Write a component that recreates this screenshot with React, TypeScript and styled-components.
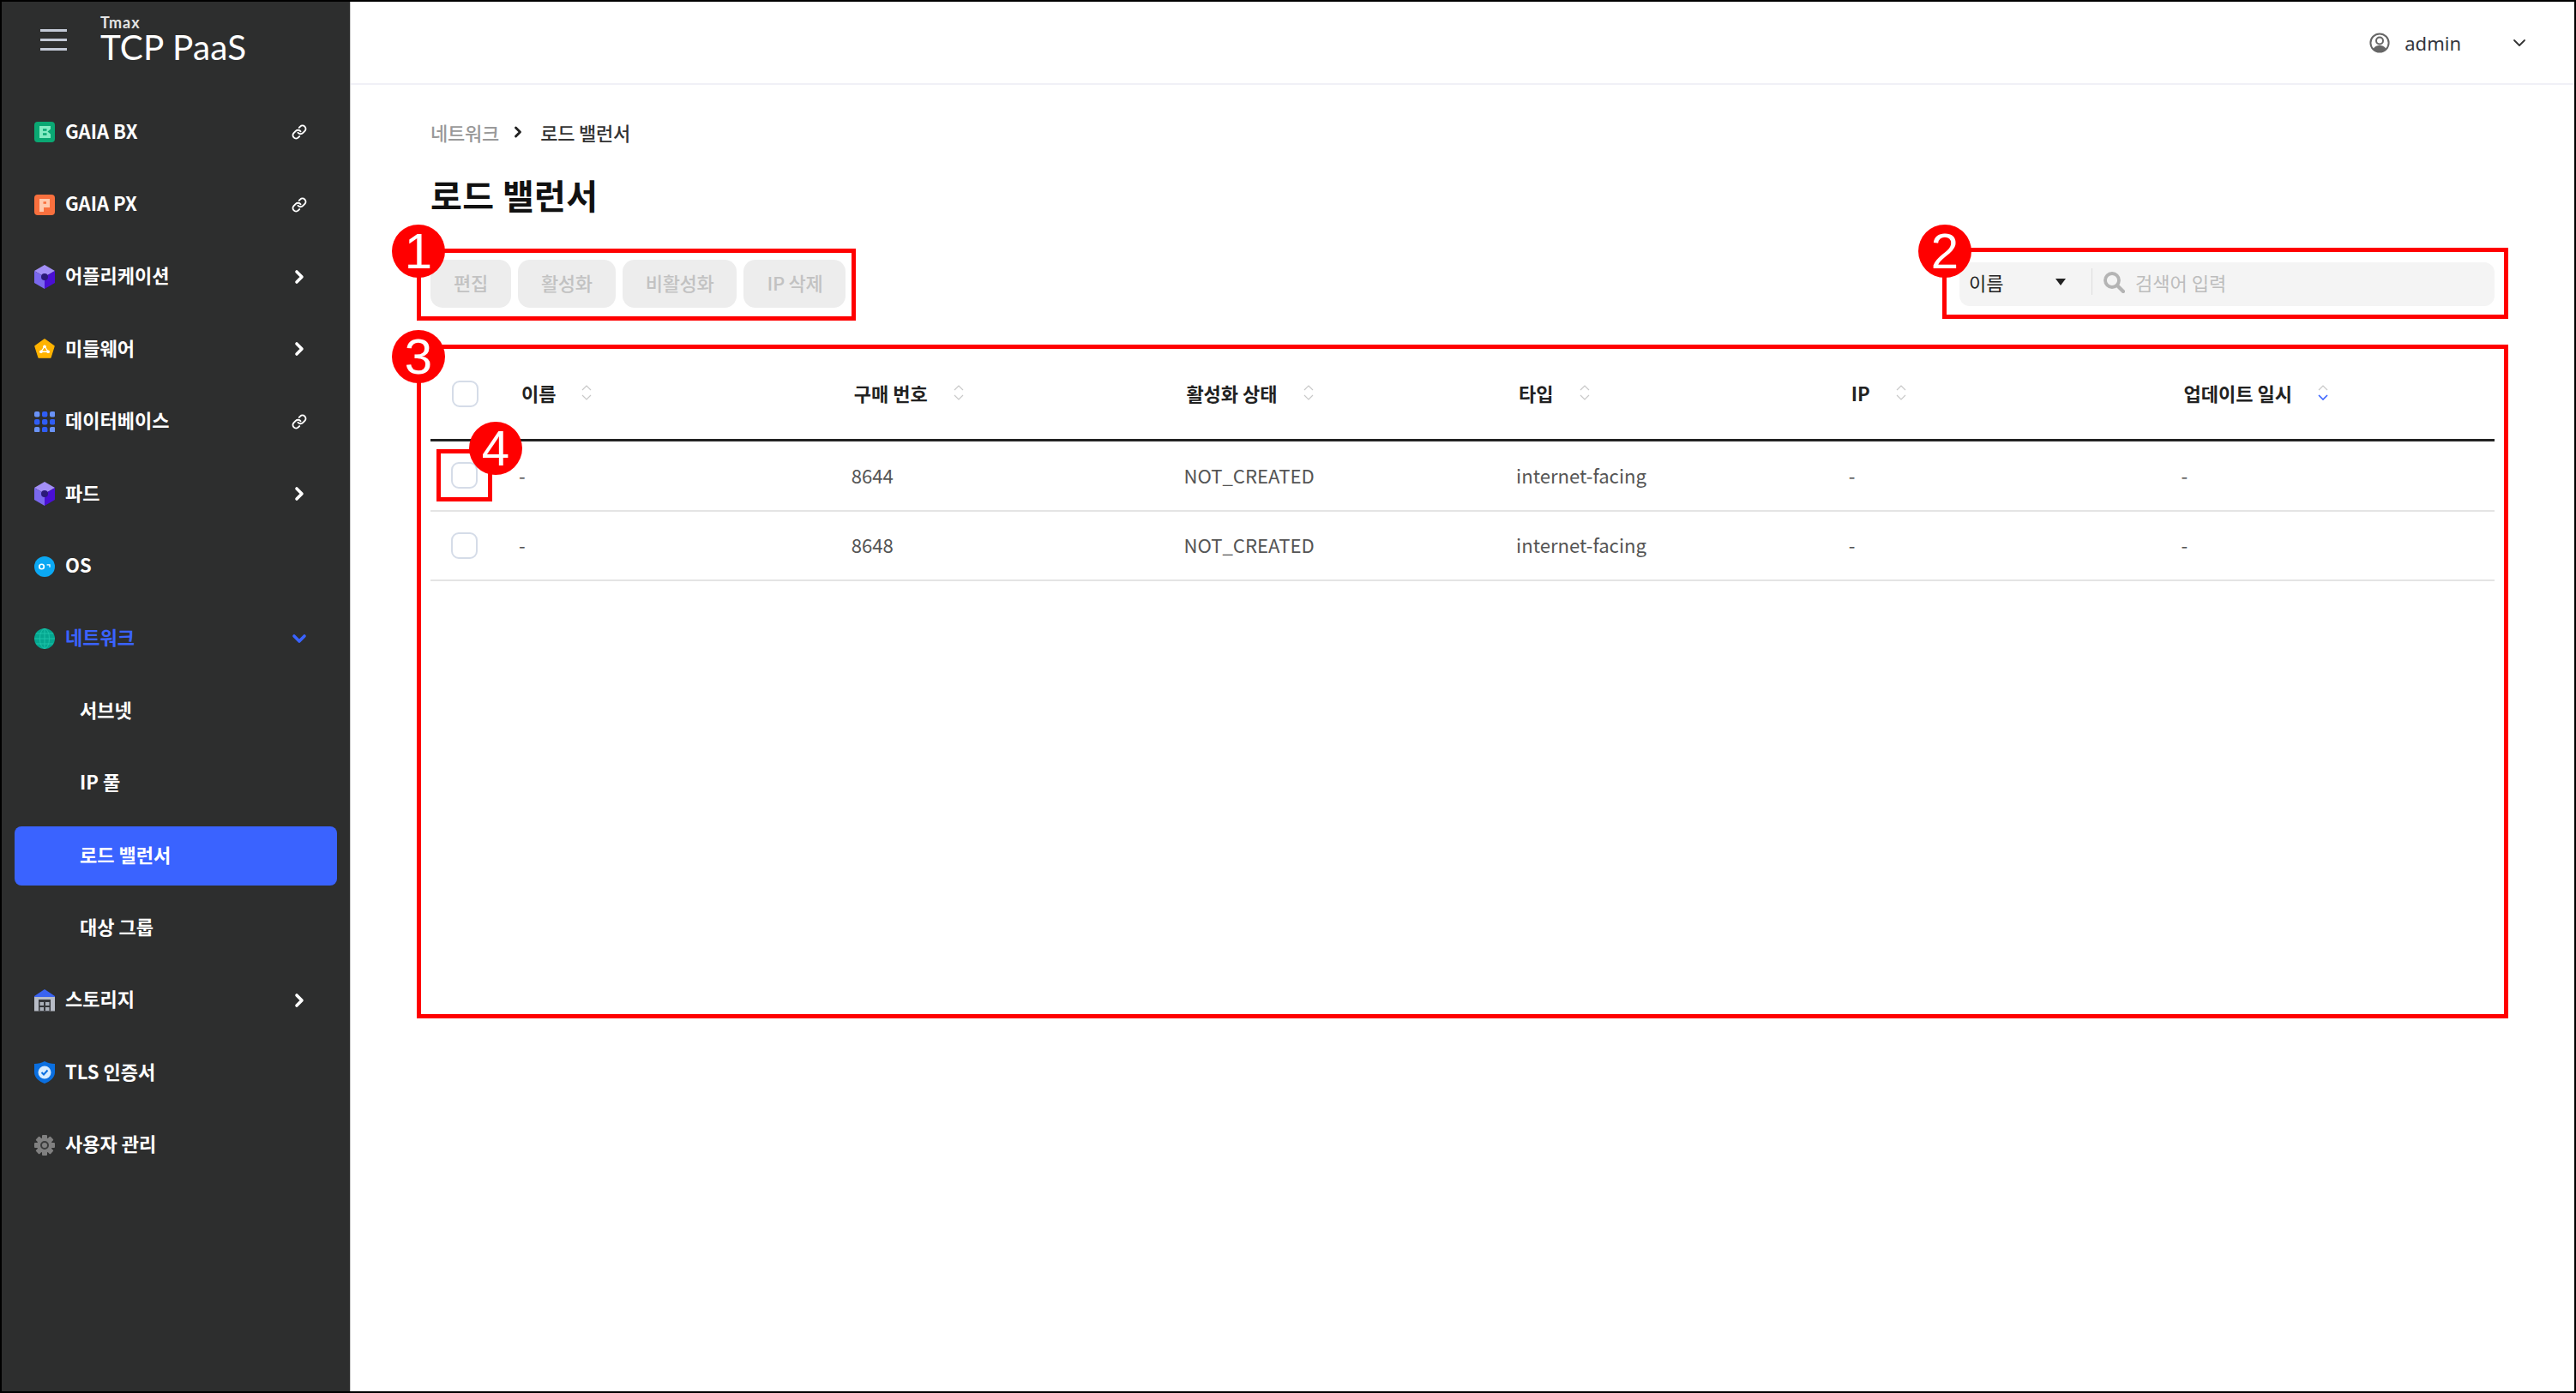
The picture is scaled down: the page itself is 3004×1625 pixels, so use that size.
import React from "react";
import styled, { createGlobalStyle } from "styled-components";
import { ChevronDown, ChevronRight, Link as LinkIcon } from "lucide-react";

const GlobalStyle = createGlobalStyle`
  html, body {
    margin: 0;
    padding: 0;
    background: #ffffff;
    overflow: hidden;
  }
  * {
    box-sizing: border-box;
  }
  body {
    font-family: "Noto Sans CJK KR", "Noto Sans", sans-serif;
  }
`;

const Frame = styled.div`
  position: relative;
  display: flex;
  width: 3004px;
  height: 1625px;
  border: 2px solid #000000;
  background: #ffffff;
`;

const Sidebar = styled.aside`
  flex: 0 0 407px;
  height: 100%;
  background: #2d2e2e;
  border-right: 1px solid #c9c9c9;
`;

const Brand = styled.div`
  display: flex;
  height: 110px;
`;

const Hamburger = styled.div`
  display: flex;
  flex-direction: column;
  gap: 8px;
  width: 31px;
  margin: 32px 0 0 45px;

  span {
    height: 3px;
    background: #c3c9d6;
  }
`;

const LogoBlock = styled.div`
  display: flex;
  flex-direction: column;
  margin: 17px 0 0 39px;
  color: #ffffff;
  font-family: "Lato", sans-serif;
`;

const LogoSmall = styled.span`
  font-size: 18px;
  line-height: 15px;
  font-weight: 700;
  letter-spacing: 1px;
  color: #e4e4e4;
`;

const LogoLarge = styled.span`
  font-size: 40.5px;
  line-height: 42px;
  letter-spacing: 0.2px;
  white-space: nowrap;
`;

const NavRow = styled.div<{ $active?: boolean }>`
  display: flex;
  align-items: center;
  height: 84.4px;
  padding-left: 38px;
  color: ${(p) => (p.$active ? "#3a63ff" : "#ffffff")};
  font-size: 22px;
  font-weight: 700;
`;

const NavIcon = styled.span`
  display: flex;
  align-items: center;
  justify-content: center;
  flex: 0 0 24px;
  width: 24px;
  height: 28px;
  margin-right: 12px;
`;

const NavLabel = styled.span`
  flex: 1;
  margin-bottom: 5px;
  white-space: nowrap;
`;

const NavTail = styled.span`
  display: flex;
  align-items: center;
  justify-content: center;
  width: 26px;
  margin-right: 46px;
`;

const SubRow = styled.div`
  display: flex;
  align-items: center;
  height: 84.4px;
  padding: 0 15px;
`;

const SubLabel = styled.div<{ $active?: boolean }>`
  display: flex;
  align-items: center;
  width: 100%;
  height: 69px;
  padding: 0 0 5px 76px;
  border-radius: 8px;
  background: ${(p) => (p.$active ? "#3a63ff" : "transparent")};
  color: #ffffff;
  font-size: 22px;
  font-weight: 700;
`;

const Main = styled.main`
  flex: 1;
  display: flex;
  flex-direction: column;
  min-width: 0;
`;

const TopBar = styled.header`
  display: flex;
  align-items: center;
  justify-content: flex-end;
  height: 97px;
  padding-right: 52px;
  border-bottom: 2px solid #f0f0f7;
`;

const UserName = styled.span`
  margin: 0 56px 0 17px;
  font-family: "Noto Sans", sans-serif;
  font-size: 22px;
  color: #33363d;
`;

const Content = styled.div`
  display: flex;
  flex-direction: column;
  padding: 40px 93px 0 93px;
`;

const Breadcrumb = styled.nav`
  display: flex;
  align-items: center;
  height: 30px;
  font-size: 22px;
  font-weight: 500;
  letter-spacing: -0.2px;
  color: #999999;
`;

const CrumbCurrent = styled.span`
  color: #333333;
`;

const CrumbArrow = styled.span`
  display: flex;
  margin: 0 16px 0 12px;
  color: #222222;
`;

const Title = styled.h1`
  margin: 29px 0 0;
  font-size: 40px;
  line-height: 58px;
  letter-spacing: 0.4px;
  font-weight: 700;
  color: #111111;
`;

const Toolbar = styled.div`
  display: flex;
  align-items: center;
  justify-content: space-between;
  height: 56px;
  margin-top: 47px;
`;

const ButtonGroup = styled.div`
  display: flex;
  gap: 8px;
`;

const ActionButton = styled.button`
  height: 56px;
  padding: 0 27px 5px;
  border: none;
  border-radius: 14px;
  background: #ededed;
  color: #c2c2c2;
  font-family: inherit;
  font-size: 22px;
  font-weight: 500;
  letter-spacing: -0.3px;
`;

const SearchBox = styled.div`
  display: flex;
  align-items: center;
  width: 624px;
  height: 51px;
  padding-bottom: 5px;
  border-radius: 12px;
  background: #f4f4f4;
`;

const SearchField = styled.div`
  display: flex;
  align-items: center;
  justify-content: space-between;
  width: 155px;
  height: 31px;
  padding: 0 30px 0 11px;
  border-right: 1px solid #dddddd;
  font-size: 22px;
  color: #222222;
`;

const Caret = styled.span`
  width: 0;
  height: 0;
  border-left: 6.5px solid transparent;
  border-right: 6.5px solid transparent;
  border-top: 8px solid #222222;
`;

const SearchGlyph = styled.svg`
  margin-left: 12px;
`;

const Placeholder = styled.span`
  margin-left: 12px;
  font-size: 22px;
  color: #bdbdbd;
`;

const Table = styled.div`
  margin-top: 45px;
`;

const columns = "103px repeat(5, 387.7px) 1fr";

const HeadRow = styled.div`
  display: grid;
  grid-template-columns: ${columns};
  align-items: center;
  height: 111px;
  padding-top: 3px;
  border-bottom: 3px solid #222222;
`;

const BodyRow = styled.div`
  display: grid;
  grid-template-columns: ${columns};
  align-items: center;
  height: 81.5px;
  border-bottom: 2px solid #e4e4e4;
`;

const HeadCell = styled.div`
  display: flex;
  align-items: center;
  margin-bottom: 4px;
  padding-left: 3px;
  font-size: 22px;
  font-weight: 700;
  color: #222222;

  svg {
    margin-left: 30px;
  }
`;

const BodyCell = styled.div`
  margin-bottom: 2px;
  font-size: 22.15px;
  color: #555555;
`;

const Checkbox = styled.span<{ $inset: number }>`
  display: block;
  width: 31px;
  height: 31px;
  margin-left: ${(p) => p.$inset}px;
  border: 2px solid #d5dce8;
  border-radius: 9px;
  background: #ffffff;
`;

const AnnotationLayer = styled.div`
  position: absolute;
  top: -2px;
  left: -2px;
  width: 3004px;
  height: 1625px;
  pointer-events: none;
`;

const RedBox = styled.div<{ $x: number; $y: number; $w: number; $h: number }>`
  position: absolute;
  left: ${(p) => p.$x}px;
  top: ${(p) => p.$y}px;
  width: ${(p) => p.$w}px;
  height: ${(p) => p.$h}px;
  border: 5px solid #ff0000;
`;

const RedBadge = styled.div<{ $x: number; $y: number }>`
  position: absolute;
  left: ${(p) => p.$x}px;
  top: ${(p) => p.$y}px;
  display: flex;
  align-items: center;
  justify-content: center;
  width: 62px;
  height: 62px;
  border-radius: 50%;
  background: #ff0000;
  color: #ffffff;
  font-family: "Liberation Sans", sans-serif;
  font-size: 58px;
  line-height: 62px;
`;

const GaiaBxIcon = () => (
  <svg width="24" height="24" viewBox="0 0 24 24">
    <rect width="24" height="24" rx="4" fill="#0aa873" />
    <path d="M6 5H19V8.5L15.5 11.5 19 14.5V19H6Z" fill="#84ecc4" />
    <path d="M10 9.5H14.5M10 14.5H14.5" stroke="#0aa873" strokeWidth="2.4" />
  </svg>
);

const GaiaPxIcon = () => (
  <svg width="24" height="24" viewBox="0 0 24 24">
    <rect width="24" height="24" rx="4" fill="#f9703e" />
    <path d="M6 5H18V15H11V20H6Z" fill="#ffc9ad" />
    <path d="M10.5 9.5H14" stroke="#f9703e" strokeWidth="2.6" />
  </svg>
);

const CubeIcon = () => (
  <svg width="24" height="28" viewBox="0 0 24 28">
    <path d="M12 0 24 7 12 14 0 7Z" fill="#a38ff7" />
    <path d="M0 7 12 14V28L0 21Z" fill="#7a68ee" />
    <path d="M24 7 12 14V28L24 21Z" fill="#4a0fd4" />
    <circle cx="12" cy="14" r="4" fill="#2b1a78" />
  </svg>
);

const MiddlewareIcon = () => (
  <svg width="26" height="26" viewBox="0 0 26 26">
    <path d="M13 1 25 9.5 20.5 24H5.5L1 9.5Z" fill="#ffb300" stroke="#ffb300" strokeWidth="1.5" strokeLinejoin="round" />
    <path d="M13 10 8.5 16.5H17.5Z" fill="none" stroke="#ffffff" strokeWidth="1.4" />
    <circle cx="13" cy="10" r="2" fill="#ffffff" />
    <circle cx="8.5" cy="16.5" r="2" fill="#ffffff" />
    <circle cx="17.5" cy="16.5" r="2" fill="#ffffff" />
  </svg>
);

const DatabaseIcon = () => (
  <svg width="24" height="24" viewBox="0 0 24 24">
    {[0, 9, 18].map((y) =>
      [0, 9, 18].map((x) => (
        <rect key={`${x}-${y}`} x={x} y={y} width="6.4" height="6.4" rx="2" fill={y === 9 || x === 9 ? "#2f5df5" : "#6a93f7"} />
      ))
    )}
  </svg>
);

const OsIcon = () => (
  <svg width="28" height="28" viewBox="0 0 28 28">
    <circle cx="14" cy="14" r="14" fill="#0ba8f3" />
    <circle cx="10" cy="14" r="3.2" fill="none" stroke="#ffffff" strokeWidth="2" />
    <path d="M17 11.5H21V15" fill="none" stroke="#ffffff" strokeWidth="1.5" />
  </svg>
);

const GlobeIcon = () => (
  <svg width="24" height="24" viewBox="0 0 24 24">
    <circle cx="12" cy="12" r="12" fill="#05a68f" />
    <g fill="none" stroke="#1cc2a8" strokeWidth="1">
      <ellipse cx="12" cy="12" rx="5.5" ry="11.5" />
      <path d="M12 0V24M0 12H24M2 6H22M2 18H22" />
    </g>
  </svg>
);

const StorageIcon = () => (
  <svg width="24" height="26" viewBox="0 0 24 26">
    <path d="M0 8 12 0 24 8V10H0Z" fill="#3a63f0" />
    <path d="M0 9H24V25.5H0Z" fill="#b7bcc6" />
    <rect x="5" y="12" width="14" height="13.5" fill="#34363a" />
    <rect x="6.5" y="15" width="4.5" height="4" fill="#aab0ba" />
    <rect x="13" y="15" width="4.5" height="4" fill="#aab0ba" />
    <rect x="6.5" y="21" width="4.5" height="4" fill="#aab0ba" />
    <rect x="13" y="21" width="4.5" height="4" fill="#aab0ba" />
  </svg>
);

const ShieldIcon = () => (
  <svg width="24" height="26" viewBox="0 0 24 26">
    <path d="M12 0C15 2 20 3 24 3V13C24 19 18 24 12 26 6 24 0 19 0 13V3C4 3 9 2 12 0Z" fill="#0a6fe0" />
    <circle cx="12" cy="13" r="7.5" fill="#d7ecff" />
    <path d="M8.5 13 11 15.5 15.5 10.5" fill="none" stroke="#0a6fe0" strokeWidth="2" />
  </svg>
);

const GearIcon = () => (
  <svg width="24" height="24" viewBox="0 0 24 24">
    <g fill="#808080">
      {[0, 45, 90, 135, 180, 225, 270, 315].map((deg) => (
        <rect key={deg} x="9" y="0" width="6" height="6" rx="1" transform={`rotate(${deg} 12 12)`} />
      ))}
      <circle cx="12" cy="12" r="9" />
    </g>
    <circle cx="12" cy="12" r="4" fill="none" stroke="#3a3b3b" strokeWidth="2" />
  </svg>
);

const UserIcon = () => (
  <svg width="24" height="24" viewBox="0 0 24 24">
    <circle cx="12" cy="12" r="10.6" fill="none" stroke="#666666" strokeWidth="2" />
    <circle cx="12" cy="9.5" r="4" fill="none" stroke="#666666" strokeWidth="2" />
    <path d="M4.5 19.5C6 16 9 15 12 15S18 16 19.5 19.5C17.5 21.7 15 23 12 23S6.5 21.7 4.5 19.5Z" fill="#666666" />
  </svg>
);

const SearchIcon = () => (
  <SearchGlyph width="26" height="26" viewBox="0 0 26 26">
    <circle cx="11" cy="11" r="8" fill="none" stroke="#b4b4b4" strokeWidth="3.8" />
    <path d="M17 17 24 24" stroke="#b4b4b4" strokeWidth="4.2" strokeLinecap="round" />
  </SearchGlyph>
);

const SortIcon = ({ active }: { active?: boolean }) => (
  <svg width="12" height="18" viewBox="0 0 12 18" fill="none" strokeWidth="1.2">
    <path d="M1 6 6 1 11 6" stroke="#c8c8c8" />
    <path d="M1 12 6 17 11 12" stroke={active ? "#3a63ff" : "#c8c8c8"} strokeWidth={active ? 1.6 : 1.2} />
  </svg>
);

type NavEntry = {
  label: string;
  icon: React.ReactNode;
  tail?: "link" | "right" | "down";
  active?: boolean;
  sub?: { label: string; active?: boolean }[];
};

const navEntries: NavEntry[] = [
  { label: "GAIA BX", icon: <GaiaBxIcon />, tail: "link" },
  { label: "GAIA PX", icon: <GaiaPxIcon />, tail: "link" },
  { label: "어플리케이션", icon: <CubeIcon />, tail: "right" },
  { label: "미들웨어", icon: <MiddlewareIcon />, tail: "right" },
  { label: "데이터베이스", icon: <DatabaseIcon />, tail: "link" },
  { label: "파드", icon: <CubeIcon />, tail: "right" },
  { label: "OS", icon: <OsIcon /> },
  {
    label: "네트워크",
    icon: <GlobeIcon />,
    tail: "down",
    active: true,
    sub: [{ label: "서브넷" }, { label: "IP 풀" }, { label: "로드 밸런서", active: true }, { label: "대상 그룹" }],
  },
  { label: "스토리지", icon: <StorageIcon />, tail: "right" },
  { label: "TLS 인증서", icon: <ShieldIcon /> },
  { label: "사용자 관리", icon: <GearIcon /> },
];

const headers = ["이름", "구매 번호", "활성화 상태", "타입", "IP", "업데이트 일시"];

const rows = [
  ["-", "8644", "NOT_CREATED", "internet-facing", "-", "-"],
  ["-", "8648", "NOT_CREATED", "internet-facing", "-", "-"],
];

const Tail = ({ kind }: { kind?: NavEntry["tail"] }) => {
  if (kind === "link") return <LinkIcon size={18} strokeWidth={2.6} color="#ffffff" />;
  if (kind === "right") return <ChevronRight size={24} strokeWidth={3.6} color="#ffffff" />;
  if (kind === "down") return <ChevronDown size={24} strokeWidth={3.6} color="#3a63ff" />;
  return null;
};

export default function App() {
  return (
    <>
      <GlobalStyle />
      <Frame>
        <Sidebar>
          <Brand>
            <Hamburger>
              <span />
              <span />
              <span />
            </Hamburger>
            <LogoBlock>
              <LogoSmall>Tmax</LogoSmall>
              <LogoLarge>TCP PaaS</LogoLarge>
            </LogoBlock>
          </Brand>
          {navEntries.map((entry) => (
            <React.Fragment key={entry.label}>
              <NavRow $active={entry.active}>
                <NavIcon>{entry.icon}</NavIcon>
                <NavLabel>{entry.label}</NavLabel>
                <NavTail>
                  <Tail kind={entry.tail} />
                </NavTail>
              </NavRow>
              {entry.sub?.map((item) => (
                <SubRow key={item.label}>
                  <SubLabel $active={item.active}>{item.label}</SubLabel>
                </SubRow>
              ))}
            </React.Fragment>
          ))}
        </Sidebar>

        <Main>
          <TopBar>
            <UserIcon />
            <UserName>admin</UserName>
            <ChevronDown size={24} strokeWidth={1.8} color="#333333" />
          </TopBar>

          <Content>
            <Breadcrumb>
              <span>네트워크</span>
              <CrumbArrow>
                <ChevronRight size={20} strokeWidth={3.4} />
              </CrumbArrow>
              <CrumbCurrent>로드 밸런서</CrumbCurrent>
            </Breadcrumb>
            <Title>로드 밸런서</Title>

            <Toolbar>
              <ButtonGroup>
                <ActionButton>편집</ActionButton>
                <ActionButton>활성화</ActionButton>
                <ActionButton>비활성화</ActionButton>
                <ActionButton>IP 삭제</ActionButton>
              </ButtonGroup>
              <SearchBox>
                <SearchField>
                  이름
                  <Caret />
                </SearchField>
                <SearchIcon />
                <Placeholder>검색어 입력</Placeholder>
              </SearchBox>
            </Toolbar>

            <Table>
              <HeadRow>
                <Checkbox $inset={25} />
                {headers.map((header, i) => (
                  <HeadCell key={header}>
                    {header}
                    <SortIcon active={i === headers.length - 1} />
                  </HeadCell>
                ))}
              </HeadRow>
              {rows.map((row) => (
                <BodyRow key={row[1]}>
                  <Checkbox $inset={23.5} />
                  {row.map((cell, i) => (
                    <BodyCell key={i}>{cell}</BodyCell>
                  ))}
                </BodyRow>
              ))}
            </Table>
          </Content>
        </Main>

        <AnnotationLayer>
          <RedBox $x={486} $y={290} $w={512} $h={84} />
          <RedBox $x={2265} $y={289} $w={660} $h={83} />
          <RedBox $x={486} $y={402} $w={2439} $h={786} />
          <RedBox $x={509} $y={524} $w={65} $h={61} />
          <RedBadge $x={457} $y={262}>1</RedBadge>
          <RedBadge $x={2237} $y={262}>2</RedBadge>
          <RedBadge $x={457} $y={385}>3</RedBadge>
          <RedBadge $x={547} $y={492}>4</RedBadge>
        </AnnotationLayer>
      </Frame>
    </>
  );
}
